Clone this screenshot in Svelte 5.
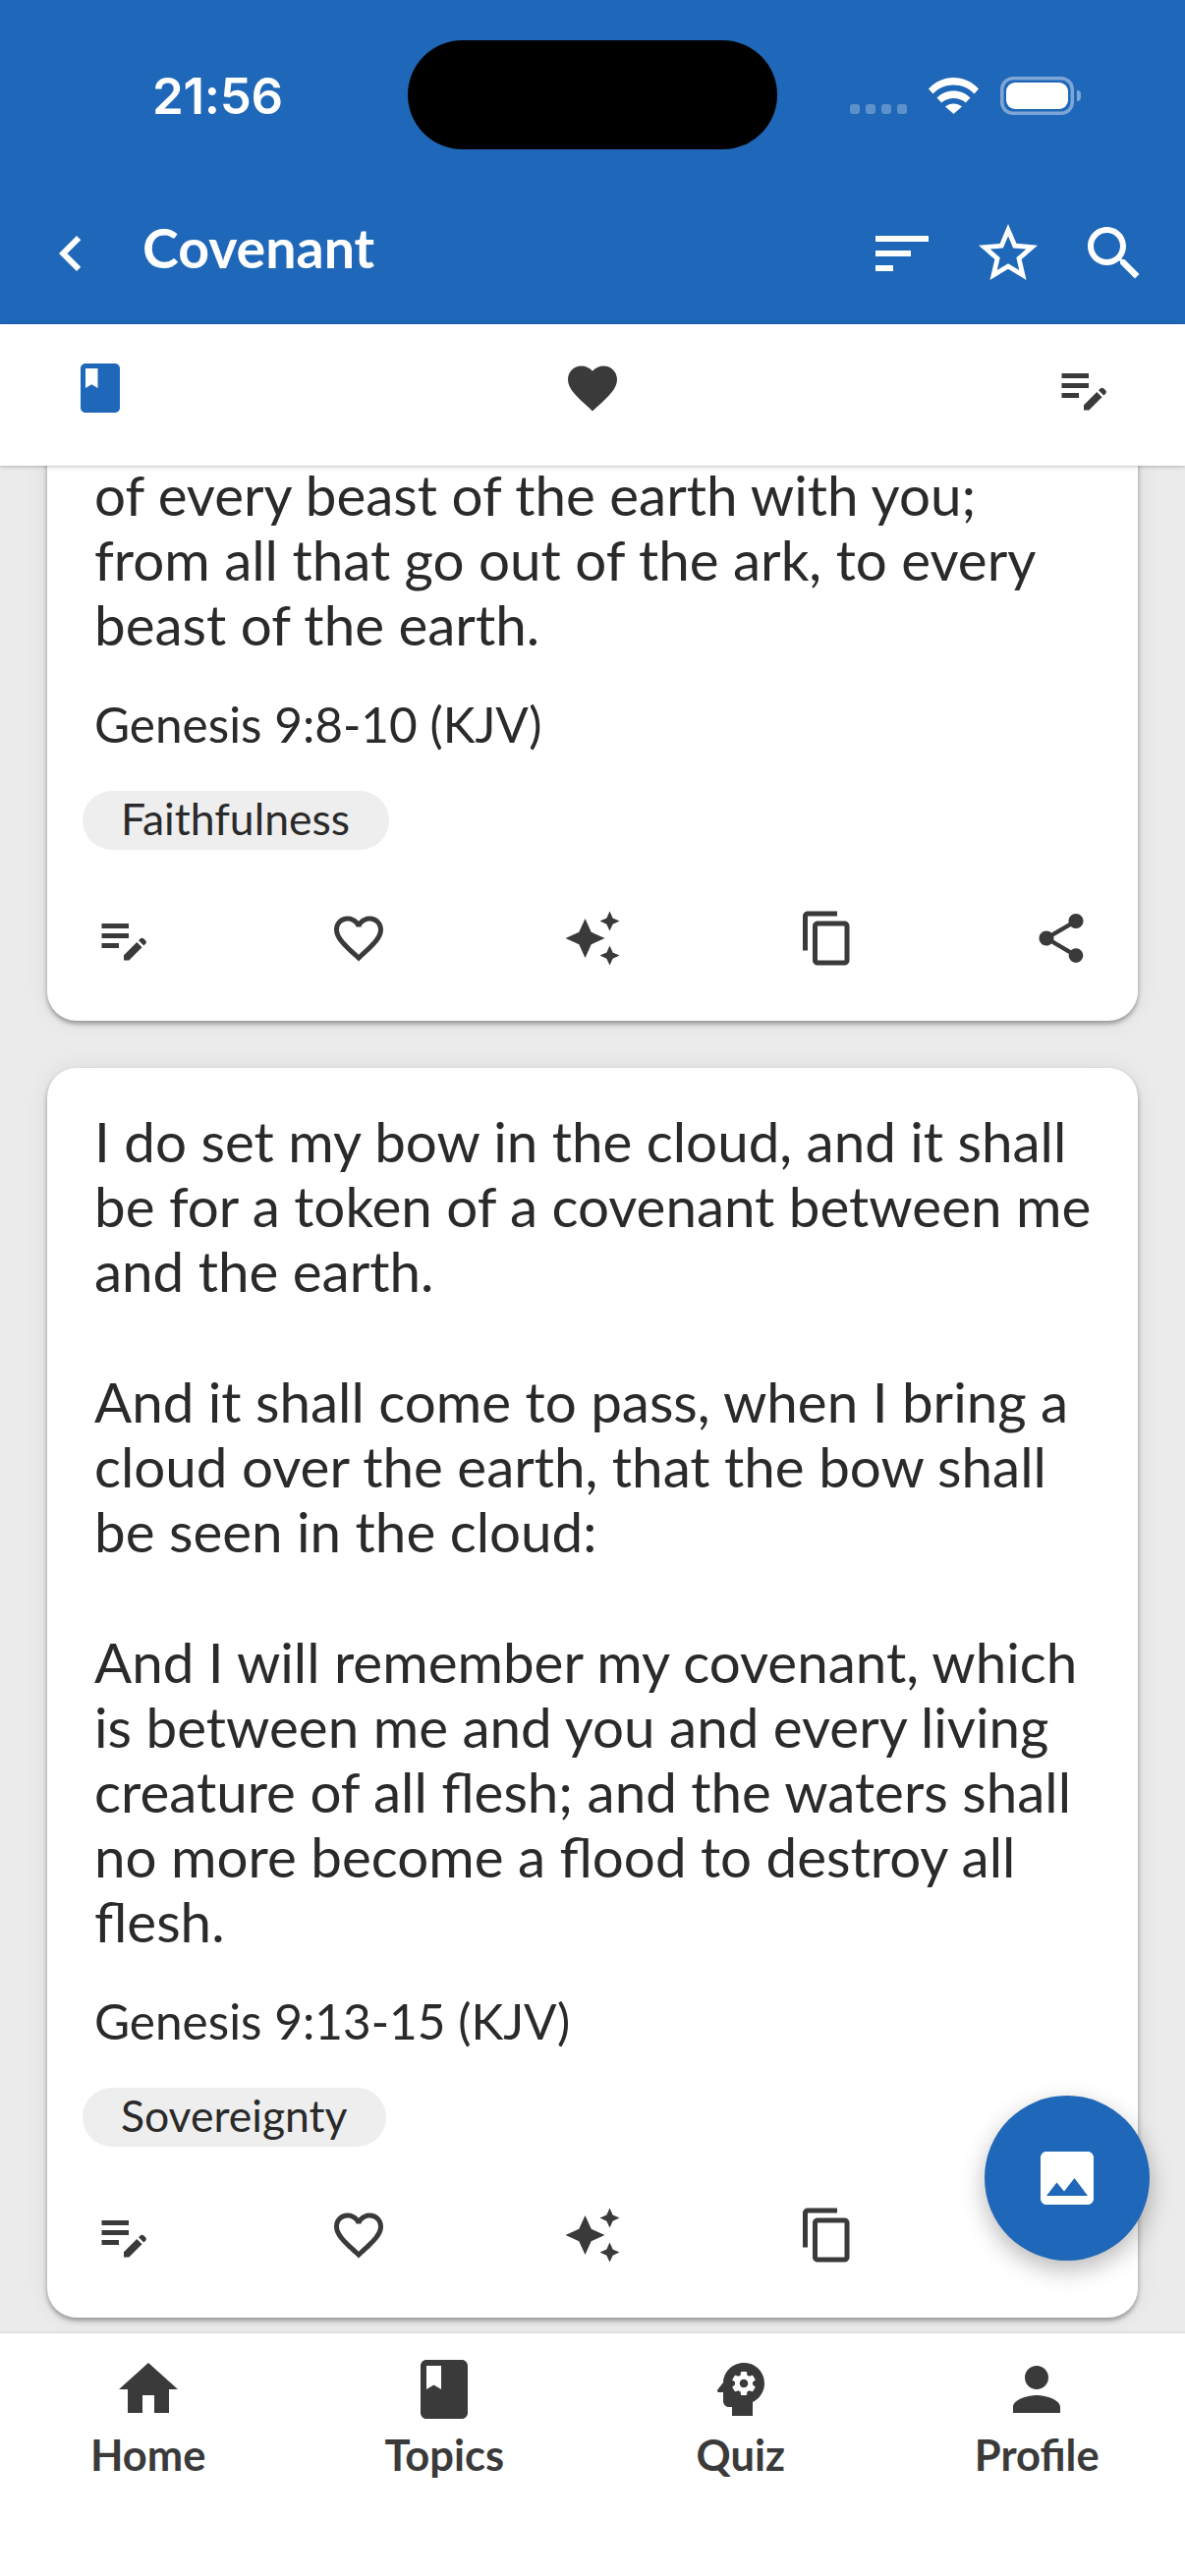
<script>
  const P = {
    note: 'M3 10h11v2H3zM3 8h11V6H3zM3 16h7v-2H3zM18.01 12.87l.71-.71c.39-.39 1.02-.39 1.41 0l.71.71c.39.39.39 1.02 0 1.41l-.71.71zM17.3 13.58L12 18.88V21h2.12l5.3-5.3z',
    heart: 'M16.5 3c-1.74 0-3.41.81-4.5 2.09C10.91 3.81 9.24 3 7.5 3 4.42 3 2 5.42 2 8.5c0 3.78 3.4 6.86 8.55 11.54L12 21.35l1.45-1.32C18.6 15.36 22 12.28 22 8.5 22 5.42 19.58 3 16.5 3zm-4.4 15.55l-.1.1-.1-.1C7.14 14.24 4 11.39 4 8.5 4 6.5 5.5 5 7.5 5c1.54 0 3.04.99 3.57 2.36h1.87C13.46 5.99 14.96 5 16.5 5c2 0 3.5 1.5 3.5 3.5 0 2.89-3.14 5.74-7.9 10.05z',
    heartFull: 'M12 21.35l-1.45-1.32C5.4 15.36 2 12.28 2 8.5 2 5.42 4.42 3 7.5 3c1.74 0 3.41.81 4.5 2.09C13.09 3.81 14.76 3 16.5 3 19.58 3 22 5.42 22 8.5c0 3.78-3.4 6.86-8.55 11.54L12 21.35z',
    spark: 'M19 9l1.25-2.75L23 5l-2.75-1.25L19 1l-1.25 2.75L15 5l2.75 1.25L19 9zm-7.5.5L9 4 6.5 9.5 1 12l5.5 2.5L9 20l2.5-5.5L17 12l-5.5-2.5zM19 15l-1.25 2.75L15 19l2.75 1.25L19 23l1.25-2.75L23 19l-2.75-1.25L19 15z',
    copy: 'M16 1H4c-1.1 0-2 .9-2 2v14h2V3h12V1zm3 4H8c-1.1 0-2 .9-2 2v14c0 1.1.9 2 2 2h11c1.1 0 2-.9 2-2V7c0-1.1-.9-2-2-2zm0 16H8V7h11v14z',
    share: 'M18 16.08c-.76 0-1.44.3-1.96.77L8.91 12.7c.05-.23.09-.46.09-.7s-.04-.47-.09-.7l7.05-4.11c.54.5 1.25.81 2.04.81 1.66 0 3-1.34 3-3s-1.34-3-3-3-3 1.34-3 3c0 .24.04.47.09.7L8.04 9.81C7.5 9.31 6.79 9 6 9c-1.66 0-3 1.34-3 3s1.34 3 3 3c.79 0 1.5-.31 2.04-.81l7.12 4.16c-.05.21-.08.43-.08.65 0 1.61 1.31 2.92 2.92 2.92 1.61 0 2.92-1.31 2.92-2.92s-1.31-2.92-2.92-2.92z',
    book: 'M18 2H6c-1.1 0-2 .9-2 2v16c0 1.1.9 2 2 2h12c1.1 0 2-.9 2-2V4c0-1.1-.9-2-2-2zM6 4h5v8l-2.5-1.5L6 12V4z',
    home: 'M10 20v-6h4v6h5v-8h3L12 3 2 12h3v8z',
    quiz: 'M13 8.57c-.79 0-1.43.64-1.43 1.43s.64 1.43 1.43 1.43 1.43-.64 1.43-1.43-.64-1.43-1.43-1.43zM13 3C9.25 3 6.2 5.94 6.02 9.64L4.1 12.2c-.25.33-.01.8.4.8H6v3c0 1.1.9 2 2 2h1v3h7v-4.68c2.36-1.12 4-3.53 4-6.32 0-3.87-3.13-7-7-7zm3 7c0 .13-.01.26-.02.39l.83.66c.08.06.1.16.05.25l-.8 1.39c-.05.09-.16.12-.24.09l-.99-.4c-.21.16-.43.29-.67.39L14 13.83c-.01.1-.1.17-.2.17h-1.6c-.1 0-.18-.07-.2-.17l-.15-1.06c-.25-.1-.47-.23-.68-.39l-.99.4c-.09.03-.2 0-.25-.09l-.8-1.39c-.05-.08-.03-.19.05-.25l.84-.66c-.01-.13-.02-.26-.02-.39s.02-.27.04-.39l-.85-.66c-.08-.06-.1-.16-.05-.26l.8-1.38c.05-.09.15-.12.24-.09l1 .4c.2-.15.43-.29.67-.39L12 6.17c.02-.1.1-.17.2-.17h1.6c.1 0 .18.07.2.17l.15 1.06c.24.1.46.23.67.39l1-.4c.09-.03.2 0 .24.09l.8 1.38c.05.09.03.2-.05.26l-.85.66c.03.12.04.25.04.39z',
    person: 'M12 12c2.21 0 4-1.79 4-4s-1.79-4-4-4-4 1.79-4 4 1.79 4 4 4zm0 2c-2.67 0-8 1.34-8 4v2h16v-2c0-2.66-5.33-4-8-4z',
    back: 'M15.41 7.41L14 6l-6 6 6 6 1.41-1.41L10.83 12z',
    sort: 'M3 18h6v-2H3v2zM3 6v2h18V6H3zm0 7h12v-2H3v2z',
    star: 'M22 9.24l-7.19-.62L12 2 9.19 8.63 2 9.24l5.46 4.73L5.82 21 12 17.27 18.18 21l-1.63-7.03L22 9.24zM12 15.4l-3.76 2.27 1-4.28-3.32-2.88 4.38-.38L12 6.1l1.71 4.04 4.38.38-3.32 2.88 1 4.28L12 15.4z',
    search: 'M15.5 14h-.79l-.28-.27C15.41 12.59 16 11.11 16 9.5 16 5.91 13.09 3 9.5 3S3 5.91 3 9.5 5.91 16 9.5 16c1.61 0 3.09-.59 4.23-1.57l.27.28v.79l5 4.99L20.49 19l-4.99-5zm-6 0C7.01 14 5 11.99 5 9.5S7.01 5 9.5 5 14 7.01 14 9.5 11.99 14 9.5 14z',
    photo: 'M21 19V5c0-1.1-.9-2-2-2H5c-1.1 0-2 .9-2 2v14c0 1.1.9 2 2 2h14c1.1 0 2-.9 2-2zM8.5 13.5l2.5 3.01L14.5 12l4.5 6H5l3.5-4.5z'
  };

  const cards = [
    {
      lines: ['of every beast of the earth with you;', 'from all that go out of the ark, to every', 'beast of the earth.'],
      ref: 'Genesis 9:8-10 (KJV)', tag: 'Faithfulness', actions: ['note', 'heart', 'spark', 'copy', 'share'], scrolled: true
    },
    {
      lines: ['I do set my bow in the cloud, and it shall', 'be for a token of a covenant between me', 'and the earth.', '',
        'And it shall come to pass, when I bring a', 'cloud over the earth, that the bow shall', 'be seen in the cloud:', '',
        'And I will remember my covenant, which', 'is between me and you and every living', 'creature of all flesh; and the waters shall', 'no more become a flood to destroy all', 'flesh.'],
      ref: 'Genesis 9:13-15 (KJV)', tag: 'Sovereignty', actions: ['note', 'heart', 'spark', 'copy', 'share']
    }
  ];

  const nav = [
    { icon: 'home', label: 'Home' },
    { icon: 'book', label: 'Topics' },
    { icon: 'quiz', label: 'Quiz' },
    { icon: 'person', label: 'Profile' }
  ];
</script>

{#snippet icon(name, cls)}
  <svg class={cls} viewBox="0 0 24 24" fill-rule="evenodd"><path d={P[name]} /></svg>
{/snippet}

<div class="app">
  <header class="header">
    <div class="status">
      <span class="time">21:56</span>
      <div class="sys">
        <div class="dots"><i></i><i></i><i></i><i></i></div>
        <svg class="wifi" viewBox="0 0 51 37">
          <path d="M0 11.5C7 4 15.500 0 25.500 0S44 4 51 11.500l-4.500 5C41 10.500 33.500 7.500 25.500 7.500S10 10.500 4.500 16.500z" />
          <path d="M8.500 20.500C13 16 19 13.500 25.500 13.500S38 16 42.500 20.500l-4.700 5C34.500 22.500 30 21 25.500 21S16.500 22.500 13.200 25.500z" />
          <path d="M17 29.500C19.500 27.500 22.500 26.500 25.500 26.500S31.500 27.500 34 29.500L25.500 37z" />
        </svg>
        <div class="battery"><div class="level"></div></div>
        <div class="nub"></div>
      </div>
    </div>
    <div class="appbar">
      {@render icon('back', 'ic72 back')}
      <h1>Covenant</h1>
      <div class="bar-actions">
        {@render icon('sort', 'ic72')}
        {@render icon('star', 'ic72')}
        {@render icon('search', 'ic72')}
      </div>
    </div>
    <div class="island"></div>
  </header>

  <div class="toolbar">
    {@render icon('book', 'ic60 blue')}
    {@render icon('heartFull', 'ic60')}
    {@render icon('note', 'ic60')}
  </div>

  <main class="list">
    {#each cards as c}
      <article class="card" class:scrolled={c.scrolled}>
        <div class="verse">
          {#each c.lines as l}
            <div class="line">{l}</div>
          {/each}
        </div>
        <div class="ref">{c.ref}</div>
        <div class="chip">{c.tag}</div>
        <div class="actions">
          {#each c.actions as a}
            {@render icon(a, 'ic60')}
          {/each}
        </div>
      </article>
    {/each}
  </main>

  <button class="fab" aria-label="Create image">
    {@render icon('photo', 'ic72 white')}
  </button>

  <nav class="nav">
    {#each nav as n}
      <div class="tab">
        {@render icon(n.icon, 'ic72')}
        <span>{n.label}</span>
      </div>
    {/each}
  </nav>
</div>

<style>
  :global(body) { margin: 0; background: #ebebeb; }
  .app {
    position: relative;
    width: 1206px;
    height: 2622px;
    display: flex;
    flex-direction: column;
    overflow: hidden;
    background: #ebebeb;
    font-family: Lato, "Noto Sans", sans-serif;
    color: #2a2a2a;
  }
  svg { display: block; flex: none; fill: #3a3a3a; }
  .ic72 { width: 72px; height: 72px; }
  .ic60 { width: 60px; height: 60px; }
  .blue { fill: #1f67b8; }
  .white { fill: #fff; }

  .header {
    position: relative;
    flex: none;
    height: 330px;
    background: #1f67b8;
    color: #fff;
  }
  .status {
    height: 222px;
    box-sizing: border-box;
    padding: 73px 0 0 155px;
    display: flex;
    align-items: flex-start;
  }
  .time {
    font-family: Inter, sans-serif;
    font-size: 51px;
    font-weight: 600;
    line-height: 50px;
    width: 710px;
    letter-spacing: -.3px;
  }
  .sys { display: flex; align-items: flex-start; margin-top: -1px; }
  .dots { display: flex; gap: 6px; margin-top: 34px; }
  .dots i { display: block; width: 10px; height: 10px; border-radius: 3px; background: rgba(255,255,255,.28); }
  .wifi { width: 51px; height: 37px; fill: #fff; margin: 7px 22px 0 22px; }
  .battery {
    width: 75px;
    height: 39px;
    box-sizing: border-box;
    margin-top: 6px;
    padding: 6px;
    border-radius: 13px;
    box-shadow: inset 0 0 0 3.5px rgba(255,255,255,.42);
  }
  .level { height: 27px; border-radius: 9px; background: #fff; }
  .nub { width: 4px; height: 11px; margin: 20px 0 0 3px; border-radius: 0 4px 4px 0; background: rgba(255,255,255,.42); }
  .island {
    position: absolute;
    left: 415px;
    top: 41px;
    width: 376px;
    height: 111px;
    border-radius: 56px;
    background: #000;
  }
  .appbar { display: flex; align-items: center; padding: 0 36px; height: 72px; }
  .appbar svg { fill: #fff; }
  h1 { margin: 0 0 0 37px; font-size: 55.5px; font-weight: 700; line-height: 72px; flex: 1; position: relative; top: -6px; }
  .bar-actions { display: flex; gap: 36px; }

  .toolbar {
    position: relative;
    z-index: 2;
    flex: none;
    height: 144px;
    box-sizing: border-box;
    padding: 0 73px 14px 72px;
    display: flex;
    align-items: center;
    justify-content: space-between;
    background: #fff;
    box-shadow: 0 1px 4px rgba(0,0,0,.25);
  }

  .list {
    flex: 1;
    min-height: 0;
    overflow: hidden;
    padding: 0 48px;
    display: flex;
    flex-direction: column;
    gap: 48px;
  }
  .card {
    flex: none;
    background: #fff;
    border-radius: 30px;
    padding: 41px 48px 54px;
    box-shadow: 0 3px 5px rgba(0,0,0,.35), 0 0 24px rgba(0,0,0,.07);
  }
  .card.scrolled { margin-top: -45px; }
  .line { font-size: 56.5px; line-height: 66.2px; min-height: 66.2px; white-space: nowrap; }
  .ref { margin-top: 41.4px; font-size: 49.5px; line-height: 54px; white-space: nowrap; }
  .chip {
    width: fit-content;
    margin: 41px 0 0 -12px;
    height: 60px;
    padding: 0 40px 0 39px;
    border-radius: 30px;
    background: #eee;
    font-size: 44.5px;
    line-height: 56px;
  }
  .actions { display: flex; justify-content: space-between; margin-top: 60px; }

  .fab {
    position: absolute;
    left: 1002px;
    top: 2133px;
    z-index: 3;
    width: 168px;
    height: 168px;
    padding: 0;
    border: 0;
    border-radius: 50%;
    background: #1f67b8;
    display: flex;
    align-items: center;
    justify-content: center;
    box-shadow: 0 9px 24px rgba(0,0,0,.28);
  }

  .nav {
    flex: none;
    height: 249px;
    box-sizing: border-box;
    padding-top: 21px;
    display: grid;
    grid-template-columns: repeat(4, 1fr);
    align-items: start;
    background: #fff;
    border-top: 2px solid #e0e0e0;
  }
  .tab { display: flex; flex-direction: column; align-items: center; }
  .tab span { font-size: 43.5px; font-weight: 700; line-height: 54px; margin-top: 3px; color: #3a3a3a; }
</style>
